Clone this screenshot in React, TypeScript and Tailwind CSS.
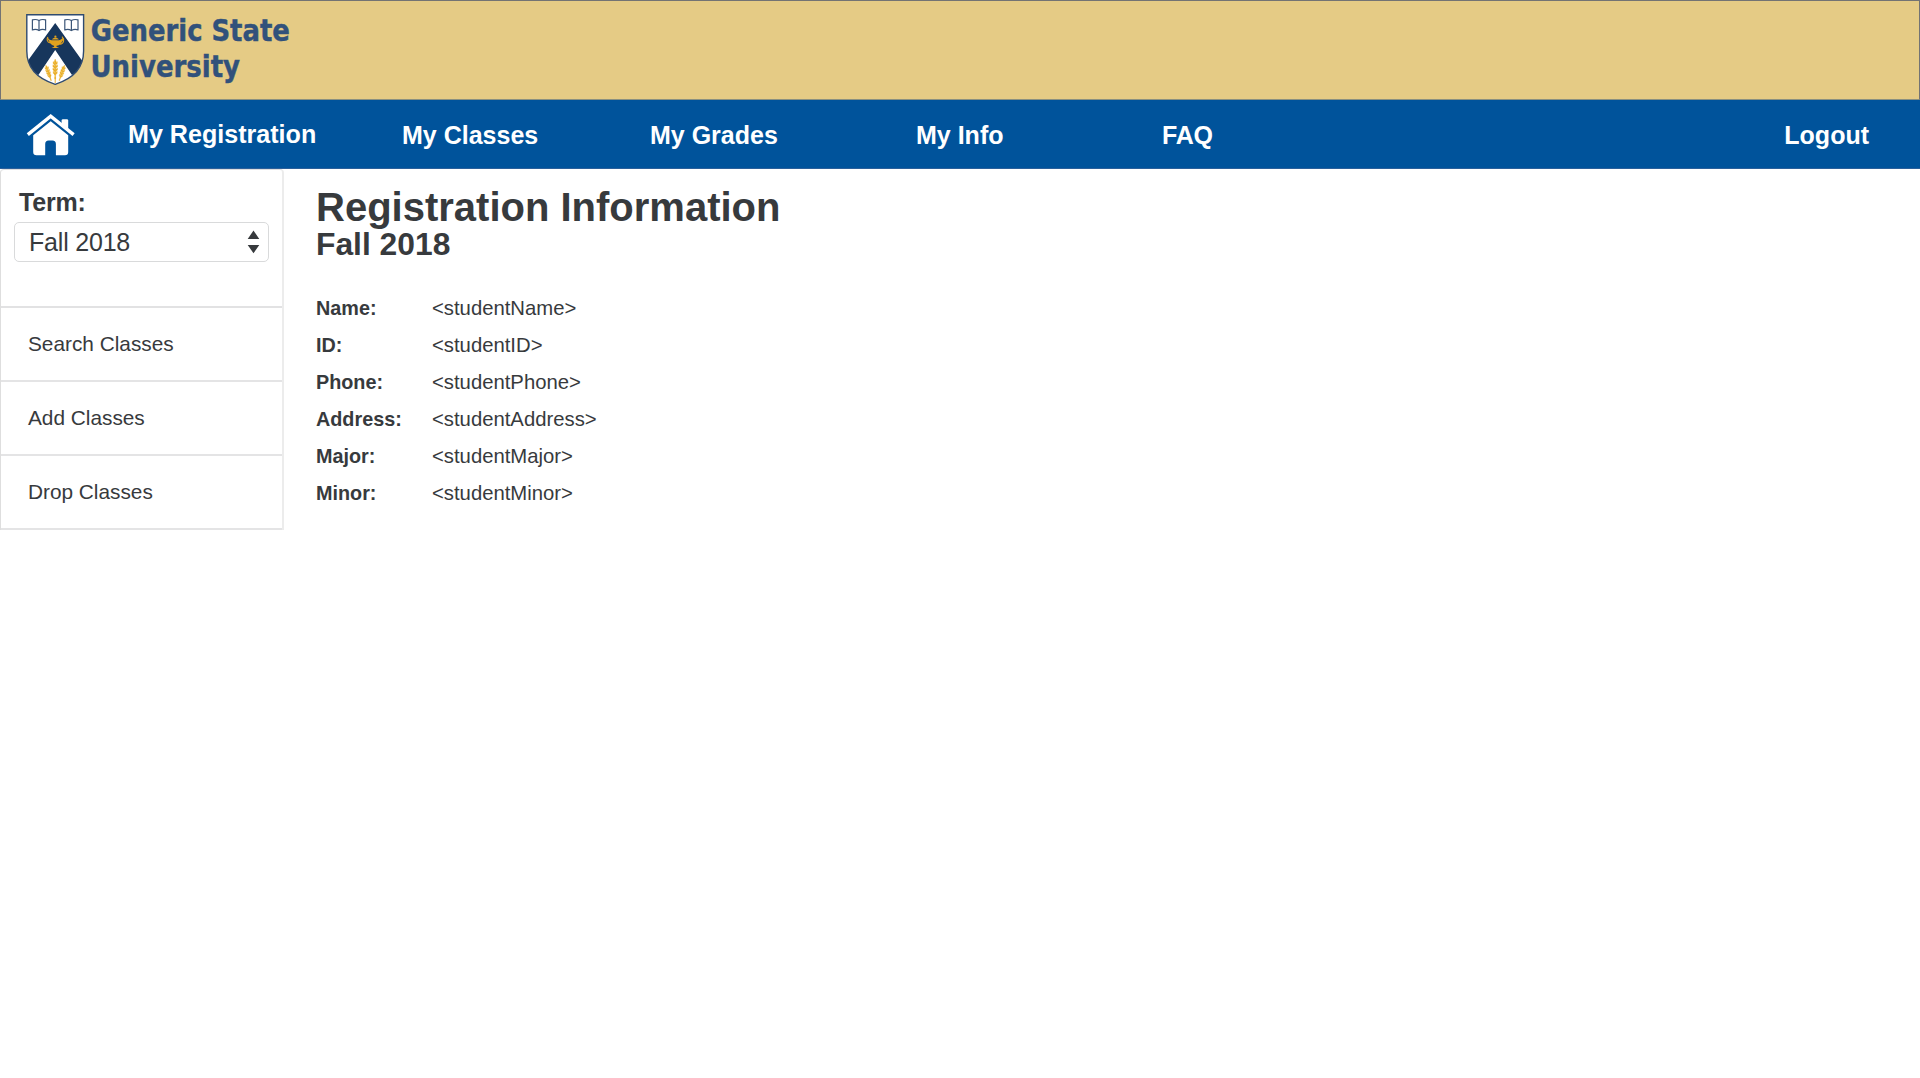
import React from 'react';

const fields = [
  ['Name:', '<studentName>'],
  ['ID:', '<studentID>'],
  ['Phone:', '<studentPhone>'],
  ['Address:', '<studentAddress>'],
  ['Major:', '<studentMajor>'],
  ['Minor:', '<studentMinor>'],
];

function Book() {
  return (
    <g fill="none" stroke="#3c5678" strokeWidth="1.2">
      <path d="M7.2 2 C5 .6 2.7 .7 .6 1.3 V11.2 C3 10.5 5.2 10.5 7.2 12 C9.2 10.5 11.4 10.5 13.8 11.2 V1.3 C11.7 .7 9.4 .6 7.2 2 Z" />
      <path d="M7.2 2 V12" />
    </g>
  );
}

function Wheat() {
  return (
    <g fill="#eaae25" stroke="#eaae25" strokeWidth=".35">
      <path d="M-.45 3 H.45 V17 H-.45 Z" />
      <path d="M0 -3 L1.1 0 L0 2.2 L-1.1 0 Z" />
      <path d="M-.2 3.4 L-2.1 1.6 V-.4 L-.2 1.4 Z M.2 3.4 L2.1 1.6 V-.4 L.2 1.4 Z" />
      <path d="M-.2 6.6 L-2.3 4.8 V2.7 L-.2 4.5 Z M.2 6.6 L2.3 4.8 V2.7 L.2 4.5 Z" />
      <path d="M-.2 9.8 L-2.3 8 V5.9 L-.2 7.7 Z M.2 9.8 L2.3 8 V5.9 L.2 7.7 Z" />
      <path d="M-.2 13 L-2 11.2 V9.2 L-.2 10.9 Z M.2 13 L2 11.2 V9.2 L.2 10.9 Z" />
    </g>
  );
}

function Crest() {
  return (
    <svg width="59" height="72" viewBox="0 0 59 72" className="block shrink-0">
      <defs>
        <clipPath id="shield">
          <path d="M.8 .8 H57.6 V37 C57.6 55 46 65 29.2 70.3 C12.4 65 .8 55 .8 37 Z" />
        </clipPath>
      </defs>
      <path d="M.8 .8 H57.6 V37 C57.6 55 46 65 29.2 70.3 C12.4 65 .8 55 .8 37 Z" fill="#fff" />
      <g clipPath="url(#shield)">
        <path d="M29.2 9 L60 52 L46 61 L29.2 36 L12.4 61 L-2 52 Z" fill="#17365c" />
      </g>
      <path d="M.8 .8 H57.6 V37 C57.6 55 46 65 29.2 70.3 C12.4 65 .8 55 .8 37 Z" fill="none" stroke="#2f4b70" strokeWidth="1.4" />
      <g transform="translate(5.8 4.6)"><Book /></g>
      <g transform="translate(38.2 4.6)"><Book /></g>
      <g fill="#dfa11f">
        <circle cx="29.4" cy="22.7" r="1.1" />
        <path d="M26 25.6 C27 23.2 31.8 23.2 32.8 25.6 Z" />
        <path d="M21.6 23 C23 26 24.4 26.2 25.6 26.2 H33 C35 26.2 36 24 37.6 24 V25.4 C35.8 27.6 35 31.2 30.6 31.8 L30.4 32.8 L33.2 34 H25.6 L28.2 32.8 L28 31.8 C24 30.8 23.4 26.6 21 24.2 Z" />
      </g>
      <path d="M34 30.2 C37.8 30 39 25.6 36 22.6 M24.4 29 C20.6 28 20.6 24.8 22 23" fill="none" stroke="#dfa11f" strokeWidth="1.1" />
      <g transform="translate(29.2 48)"><Wheat /></g>
      <path d="M29.2 63 V69" stroke="#eaae25" strokeWidth="1" />
      <g transform="translate(20.6 53.4) rotate(-19) scale(.82)"><Wheat /></g>
      <g transform="translate(37.8 53.4) rotate(19) scale(.82)"><Wheat /></g>
    </svg>
  );
}

function HomeIcon() {
  return (
    <svg width="50" height="42" viewBox="0 0 50 42" className="block" fill="#fff">
      <path d="M1.8 20.6 L24.7 2.2 L47.6 20.6" fill="none" stroke="#fff" strokeWidth="3.4" />
      <path d="M35.6 9.8 V6.6 Q35.6 5.2 37 5.2 H40.8 Q42.2 5.2 42.2 6.6 V15 Z" />
      <path d="M24.7 7.3 L42.2 21.2 V38 Q42.2 41.2 39 41.2 H29.9 V30 Q29.9 26.4 26.5 26.4 H22.6 Q19.2 26.4 19.2 30 V41.2 H10.5 Q7.2 41.2 7.2 38 V21.2 Z" />
    </svg>
  );
}

function SideItem({ children }: { children: string }) {
  return (
    <a className="flex h-[74px] items-center border-b-2 border-[#e4e4e5] pl-[27px] text-[20.8px] leading-[74px]">
      {children}
    </a>
  );
}

export default function App() {
  return (
    <div className="min-h-[1078px] bg-white font-['Liberation_Sans',Arial,sans-serif] text-[#373a3d]">
      <header className="flex h-[100px] border border-[#737373] border-b-[#8a9080] bg-[#e5cb85] pt-[13px] pl-[25px]">
        <Crest />
        <svg width="206" height="76" className="-mt-1 ml-[5px] block" fill="#31517b" stroke="#31517b" strokeWidth=".4" fontFamily="'DejaVu Sans Condensed','DejaVu Sans',sans-serif" fontWeight="700" fontSize="29.5">
          <text x=".8" y="30.5" textLength="199" lengthAdjust="spacingAndGlyphs">Generic State</text>
          <text x=".5" y="67.2" textLength="149.5" lengthAdjust="spacingAndGlyphs">University</text>
        </svg>
      </header>

      <nav className="flex h-[69px] items-center border-b border-[#2b609b] bg-[#00539b] text-[25px] leading-[68px] font-bold whitespace-nowrap text-white">
        <a className="ml-[26px] w-[102px] pt-px"><HomeIcon /></a>
        <a className="w-[274px] text-[25.1px]">My Registration</a>
        <a className="w-[248px] pt-[2px]">My Classes</a>
        <a className="w-[266px] pt-[2px]">My Grades</a>
        <a className="w-[246px] pt-[2px]">My Info</a>
        <a className="pt-[2px] tracking-[-0.2px]">FAQ</a>
        <a className="mr-[51px] ml-auto pt-[2px]">Logout</a>
      </nav>

      <div className="flex">
        <aside className="w-[284px] rounded-t border-t border-r-2 border-l border-t-[#dededf] border-r-[#ececec] border-l-[#dedede]">
          <div className="h-[138px] border-b-2 border-[#e2e2e3] pt-[17px] pl-[13px]">
            <label className="block pl-[5px] text-[25px] leading-[30px] font-bold tracking-[-0.2px]">Term:</label>
            <button className="mt-[5px] flex h-10 w-[255px] items-center justify-between rounded-[5px] border border-[#d9dadb] pr-2 pl-[14px] text-[25px] leading-[38px] tracking-[-0.2px]">
              Fall 2018
              <svg width="13" height="24" viewBox="0 0 13 24" fill="#373a3d">
                <path d="M6.5 .5 L12.3 9 H.7 Z M6.5 23.3 L12.3 15 H.7 Z" />
              </svg>
            </button>
          </div>
          <SideItem>Search Classes</SideItem>
          <SideItem>Add Classes</SideItem>
          <SideItem>Drop Classes</SideItem>
        </aside>

        <main className="pt-[18px] pl-8">
          <h1 className="text-[40px] leading-[40px] font-bold">Registration Information</h1>
          <h2 className="text-[31.8px] leading-[35px] font-bold">Fall 2018</h2>
          <dl className="mt-[28px] text-[20.3px]">
            {fields.map(([label, value]) => (
              <div key={label} className="flex h-[37px] items-center leading-[37px]">
                <dt className="w-[116px] text-[19.8px] font-bold">{label}</dt>
                <dd>{value}</dd>
              </div>
            ))}
          </dl>
        </main>
      </div>
    </div>
  );
}
